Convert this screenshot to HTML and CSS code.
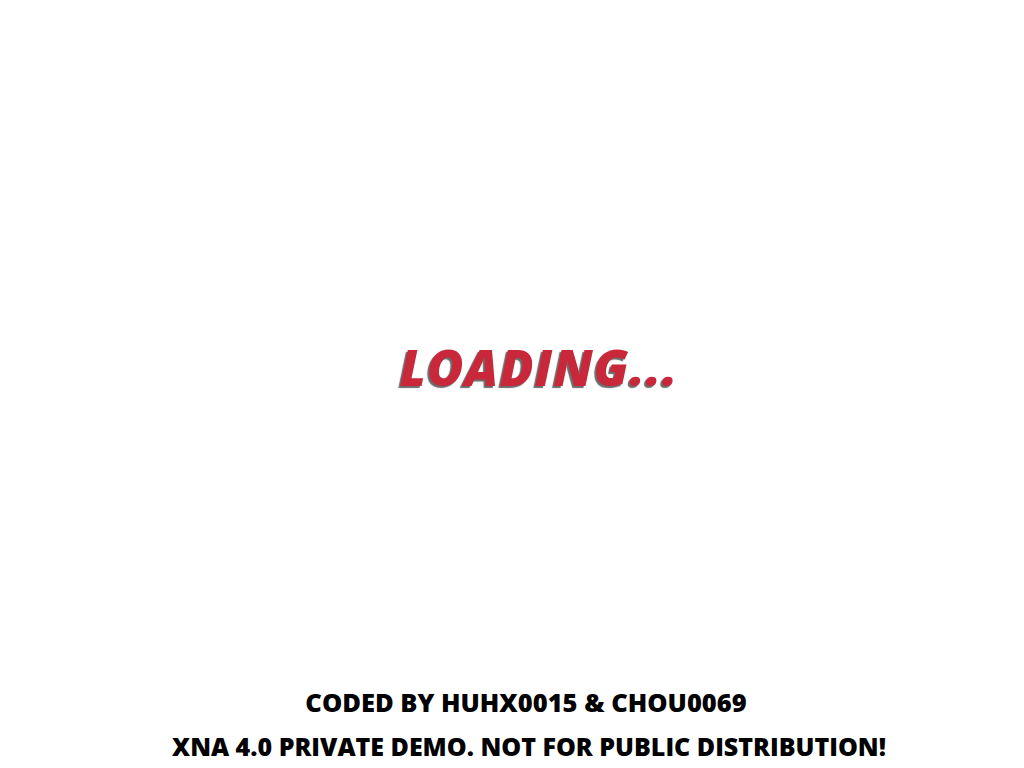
FILE: index.html
```html
<!DOCTYPE html>
<html>
<head>
<meta charset="utf-8">
<link rel="stylesheet" href="styles.css">
</head>
<body>
<div class="screen">
  <div class="center">
    <div class="loading">LOADING...</div>
  </div>
  <div class="credits">
    <div class="coded">CODED BY HUHX0015 &amp; CHOU0069</div>
    <div class="notice">XNA 4.0 PRIVATE DEMO. NOT FOR PUBLIC DISTRIBUTION!</div>
  </div>
</div>
</body>
</html>
```

FILE: styles.css
```css
html, body {
  margin: 0;
  padding: 0;
  background: #ffffff;
}
.screen {
  width: 1024px;
  height: 768px;
  display: flex;
  flex-direction: column;
  font-family: "Open Sans", "DejaVu Sans", sans-serif;
}
.center {
  flex: 1;
  display: flex;
  align-items: center;
  justify-content: center;
  padding-left: 54px;
  padding-top: 54px;
}
.loading {
  font-size: 50px;
  font-weight: 800;
  font-style: italic;
  letter-spacing: 1px;
  color: #c8283a;
  text-shadow: -2px 2px 1px #6a6a6a;
}
.credits {
  display: flex;
  flex-direction: column;
  align-items: center;
  padding-left: 28px;
  color: #000;
  font-weight: 800;
}
.coded {
  font-size: 25.5px;
  line-height: 44px;
}
.notice {
  font-size: 25px;
  line-height: 44px;
  margin-left: 6px;
}
```
